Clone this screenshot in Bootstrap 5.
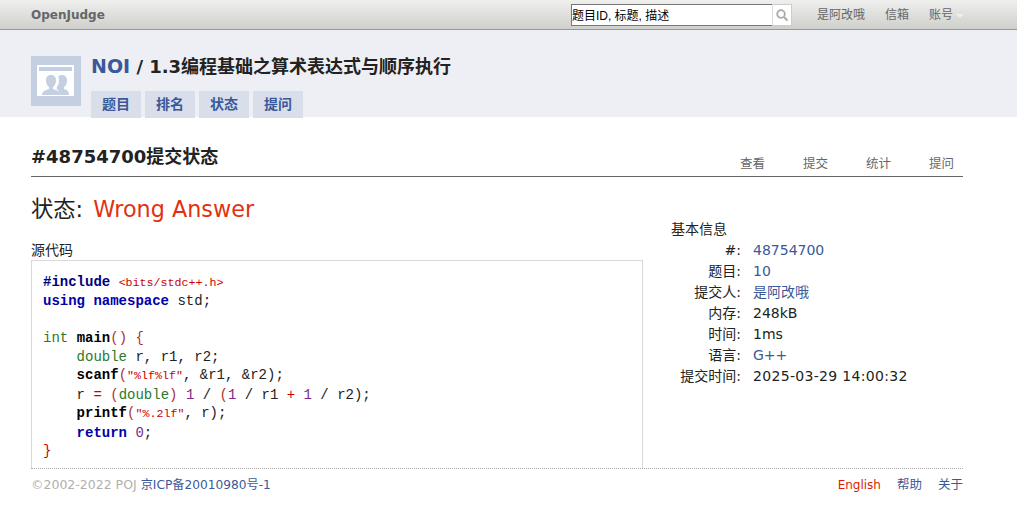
<!DOCTYPE html>
<html lang="zh">
<head>
<meta charset="utf-8">
<title>OpenJudge</title>
<link href="https://cdn.jsdelivr.net/npm/bootstrap@5.3.0/dist/css/bootstrap.min.css" rel="stylesheet">
<style>
html,body{height:100%}
body{font-family:"DejaVu Sans","Noto Sans CJK SC",sans-serif;font-size:14px;color:#222;background:#fff;overflow:hidden}
a{text-decoration:none;color:#3b5998}
.oj-top{height:30px;padding:1px 53px 0 31px;border-bottom:1px solid #999;background:linear-gradient(#efefed,#cfcfcc)}
.oj-brand{font-size:12px;font-weight:700;color:#666}
.oj-search{margin-right:25px}
.oj-input{width:201px;height:22px;border:1px solid #777;border-right:0;background:#fff;color:#000;font:12px/23px "Liberation Sans","Noto Sans CJK SC",sans-serif;padding:0;white-space:nowrap}
.oj-btn{width:20px;height:22px;border:1px solid #ccc;border-left:1px solid #ddd;background:#fff}
.oj-toplink{font-size:12px;color:#666}
.oj-toplinks{gap:20px}
.oj-caret{display:inline-block;border:4px solid transparent;border-top-color:#eee;border-bottom:0;margin-left:3px;vertical-align:middle}
.oj-head{height:87px;background:#edeff4;padding:26px 0 0 31px;gap:10px}
.oj-avatar{width:50px;height:50px;flex:none}
.oj-title{font-size:18px;font-weight:700;line-height:20px;margin:0 0 14px;color:#222}
.oj-title a{font-size:19px}
.oj-tabs{gap:4px}
.oj-tab{display:block;width:50px;height:27px;line-height:27px;text-align:center;background:#d8dfea;color:#3b5998;font-weight:700;font-size:14px}
.oj-main{padding:0 54px 0 31px}
.oj-subhead{height:60px;border-bottom:1px solid #666;padding-top:28px}
.oj-subtitle{font-size:18px;font-weight:700;line-height:24px;margin:0;color:#222}
.oj-subnav{gap:38px;padding:11px 9px 0 0}
.oj-subnav a{font-size:12.5px;line-height:16px;color:#666}
.oj-body{gap:28px}
.oj-left{width:612px;flex:none}
.oj-status{font-size:22.3px;font-weight:400;line-height:28px;margin:18px 0 18px;color:#222}
.oj-status span{color:#e1320f;margin-left:3px}
.oj-label{font-size:14px;font-weight:400;line-height:18px;margin:0 0 1px;color:#222}
.oj-code{height:208px;border:1px solid #d9d9d9;border-bottom:0;margin:0;padding:12px 11px 0;font:14px/18.44px "Liberation Mono",monospace;color:#222;overflow:hidden}
.k{color:#00a;font-weight:700}.i{color:#000080;font-weight:700}.s{color:#c00;font-size:11.67px}.o{color:#c00}.t{color:#2a7a2a}.f{color:#000;font-weight:700}.n{color:#7a2a8a}.p{color:#a33}
.oj-info{padding-top:43px}
.oj-info h3{font-size:14px;font-weight:400;line-height:18px;margin:0 0 2px;color:#222}
.oj-row{line-height:21px;height:21px;font-size:14px}
.oj-key{width:70px;text-align:right;margin-right:12px;flex:none}
.oj-date{letter-spacing:.32px}
.oj-foot{border-top:1px dotted #aaa;padding-top:7px;font-size:12.5px;line-height:18px}
.oj-copy{color:#b0b0b0}
.oj-icp{font-size:12.2px}
.oj-en{color:#d81e06;font-size:12px}
.oj-footlinks{gap:16px}
</style>
</head>
<body>
<nav class="oj-top d-flex align-items-center justify-content-between">
  <a class="oj-brand" href="#">OpenJudge</a>
  <div class="d-flex align-items-center">
    <form class="oj-search d-flex">
      <div class="oj-input">题目ID, 标题, 描述</div>
      <div class="oj-btn d-flex align-items-center justify-content-center">
        <svg width="14" height="14" viewBox="0 0 14 14"><circle cx="6" cy="6" r="3.8" fill="none" stroke="#aaa" stroke-width="1.8"/><path d="M9 9l3.5 3.5" stroke="#aaa" stroke-width="2"/></svg>
      </div>
    </form>
    <div class="oj-toplinks d-flex">
      <a class="oj-toplink" href="#">是阿改哦</a>
      <a class="oj-toplink" href="#">信箱</a>
      <a class="oj-toplink" href="#">账号<span class="oj-caret"></span></a>
    </div>
  </div>
</nav>
<header class="oj-head d-flex">
  <svg class="oj-avatar" viewBox="0 0 50 50">
    <rect width="50" height="50" fill="#c5cfe2"/>
    <rect x="6" y="9" width="37" height="31" fill="#fff"/>
    <rect x="8" y="11" width="33" height="4" fill="#c5cfe2"/>
    <path d="M11 39c0-4 4-5 7-6v-2c-2-1-3-4-3-7 0-3 2-5 5-5s5 2 5 5c0 3-1 6-3 7v2c3 1 7 2 7 6z" fill="#c5cfe2"/>
    <path d="M26 39h12c0-4-2-5-5-6v-2c2-1 3-4 3-7 0-3-2-5-5-5-1.500 0-3 .6-3.800 1.700 1.500 3 .8 8-1.500 10.300v2c1.500 1 3 3 3 6z" fill="#c5cfe2"/>
  </svg>
  <div>
    <h1 class="oj-title"><a href="#">NOI</a> / 1.3编程基础之算术表达式与顺序执行</h1>
    <div class="oj-tabs d-flex">
      <a class="oj-tab" href="#">题目</a>
      <a class="oj-tab" href="#">排名</a>
      <a class="oj-tab" href="#">状态</a>
      <a class="oj-tab" href="#">提问</a>
    </div>
  </div>
</header>
<main class="oj-main">
  <div class="oj-subhead d-flex justify-content-between">
    <h2 class="oj-subtitle">#48754700提交状态</h2>
    <div class="oj-subnav d-flex">
      <a href="#">查看</a><a href="#">提交</a><a href="#">统计</a><a href="#">提问</a>
    </div>
  </div>
  <div class="oj-body d-flex">
    <div class="oj-left">
      <p class="oj-status">状态: <span>Wrong Answer</span></p>
      <h3 class="oj-label">源代码</h3>
<pre class="oj-code"><span class="i">#include</span> <span class="s">&lt;bits/stdc++.h&gt;</span>
<span class="k">using namespace</span> std;

<span class="t">int</span> <span class="f">main</span><span class="p">() {</span>
    <span class="t">double</span> r, r1, r2;
    <span class="f">scanf</span><span class="p">(</span><span class="s">"%lf%lf"</span>, &amp;r1, &amp;r2);
    r <span class="o">=</span> <span class="p">(</span><span class="t">double</span><span class="p">)</span> <span class="n">1</span> / <span class="p">(</span><span class="n">1</span> / r1 <span class="o">+</span> <span class="n">1</span> / r2);
    <span class="f">printf</span><span class="p">(</span><span class="s">"%.2lf"</span>, r);
    <span class="k">return</span> <span class="n">0</span>;
<span class="o">}</span></pre>
    </div>
    <aside class="oj-info">
      <h3>基本信息</h3>
      <div class="oj-row d-flex"><span class="oj-key">#:</span><a href="#">48754700</a></div>
      <div class="oj-row d-flex"><span class="oj-key">题目:</span><a href="#">10</a></div>
      <div class="oj-row d-flex"><span class="oj-key">提交人:</span><a href="#">是阿改哦</a></div>
      <div class="oj-row d-flex"><span class="oj-key">内存:</span><span>248kB</span></div>
      <div class="oj-row d-flex"><span class="oj-key">时间:</span><span>1ms</span></div>
      <div class="oj-row d-flex"><span class="oj-key">语言:</span><a href="#">G++</a></div>
      <div class="oj-row d-flex"><span class="oj-key">提交时间:</span><span class="oj-date">2025-03-29 14:00:32</span></div>
    </aside>
  </div>
  <footer class="oj-foot d-flex justify-content-between">
    <div><span class="oj-copy">©2002-2022 POJ</span> <a class="oj-icp" href="#">京ICP备20010980号-1</a></div>
    <div class="oj-footlinks d-flex"><a class="oj-en" href="#">English</a><a href="#">帮助</a><a href="#">关于</a></div>
  </footer>
</main>
</body>
</html>
